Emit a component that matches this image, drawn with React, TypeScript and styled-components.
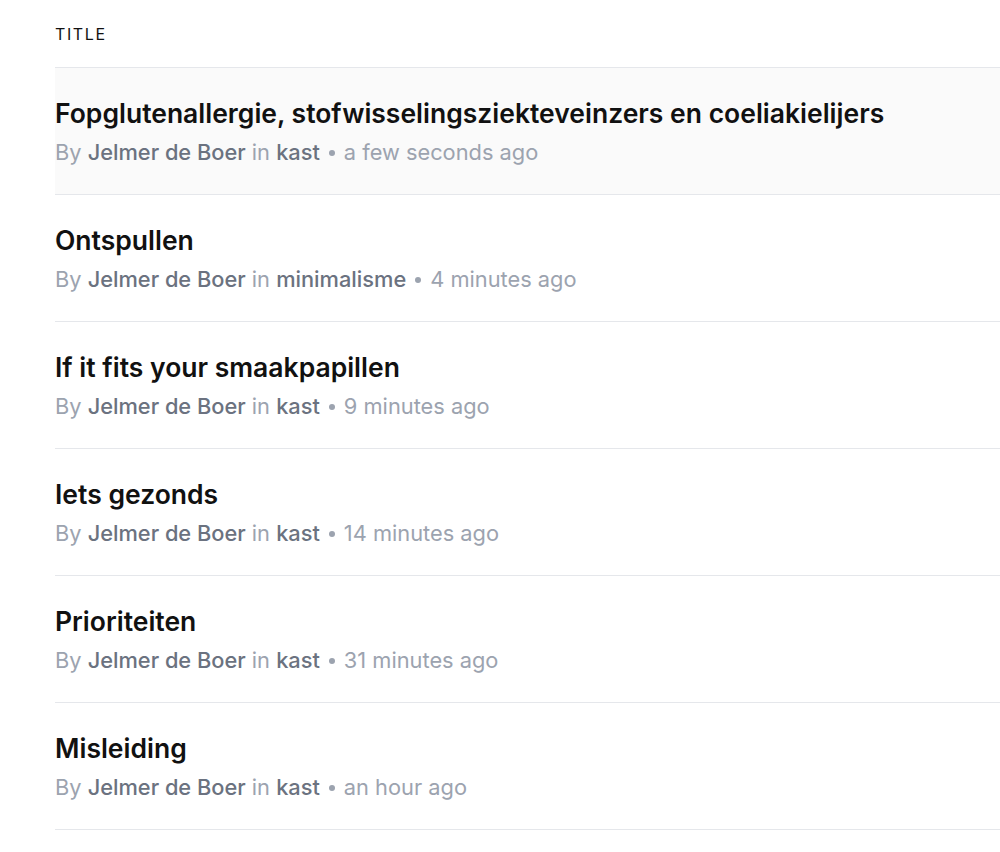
import React from 'react';
import styled, { createGlobalStyle } from 'styled-components';

const GlobalStyle = createGlobalStyle`
	body {
		margin: 0;
		background: #ffffff;
		font-family: Inter, "Noto Sans", sans-serif;
		-webkit-font-smoothing: antialiased;
	}
`;

const color = {
	'title': '#111111',
	'muted': '#9ca3af',
	'strong': '#6b7280',
	'line': '#e5e7eb',
	'hover': '#fafafa',
};

const Page = styled.div`
	padding: 0px 0px 0px 55px;
	overflow: hidden;
`;

const Header = styled.div`
	padding: 24px 0px 23px 0px;
	border-bottom: 1px solid ${ color.line };

	font-size: 16px;
	line-height: 20px;
	font-weight: 400;
	letter-spacing: 1.6px;
	text-transform: uppercase;
	color: ${ color.title };
`;

const UL = styled.ul`
	padding: 0px;
	margin: 0px;
	list-style: none;
`;

const Row = styled.li<{ $active?: boolean }>`
	padding: 29px 0px 28px 0px;
	border-bottom: 1px solid ${ color.line };
	background-color: ${ (p) => p.$active ? color.hover : 'transparent' };
`;

const Title = styled.h2`
	margin: 0px 0px 9px 0px;
	font-size: 26.5px;
	line-height: 32px;
	font-weight: 600;
	color: ${ color.title };
	white-space: nowrap;
`;

const Meta = styled.p`
	margin: 0px;
	font-size: 21.8px;
	line-height: 28px;
	color: ${ color.muted };
	white-space: nowrap;
`;

const Strong = styled.span`
	font-weight: 450;
	color: ${ color.strong };
`;

const Dot = styled.span`
	display: inline-block;
	width: 6px;
	height: 6px;
	margin: 0px 9px 0px 9px;
	border-radius: 3px;
	vertical-align: middle;
	background-color: ${ color.muted };
	position: relative;
	top: -1px;
`;

type Post = {
	title: string;
	author: string;
	category: string;
	time: string;
};

const posts : Post[] = [
	{ title: 'Fopglutenallergie, stofwisselingsziekteveinzers en coeliakielijers', author: 'Jelmer de Boer', category: 'kast', time: 'a few seconds ago' },
	{ title: 'Ontspullen', author: 'Jelmer de Boer', category: 'minimalisme', time: '4 minutes ago' },
	{ title: 'If it fits your smaakpapillen', author: 'Jelmer de Boer', category: 'kast', time: '9 minutes ago' },
	{ title: 'Iets gezonds', author: 'Jelmer de Boer', category: 'kast', time: '14 minutes ago' },
	{ title: 'Prioriteiten', author: 'Jelmer de Boer', category: 'kast', time: '31 minutes ago' },
	{ title: 'Misleiding', author: 'Jelmer de Boer', category: 'kast', time: 'an hour ago' },
];

function App() {
	return (
		<Page>
			<GlobalStyle/>
			<Header>Title</Header>
			<UL>
				{ posts.map((post, i) => (
					<Row key={ i } $active={ i == 0 }>
						<Title>{ post.title }</Title>
						<Meta>
							By <Strong>{ post.author }</Strong> in <Strong>{ post.category }</Strong>
							<Dot/>
							{ post.time }
						</Meta>
					</Row>
				)) }
			</UL>
		</Page>
	);
}

export default App;
